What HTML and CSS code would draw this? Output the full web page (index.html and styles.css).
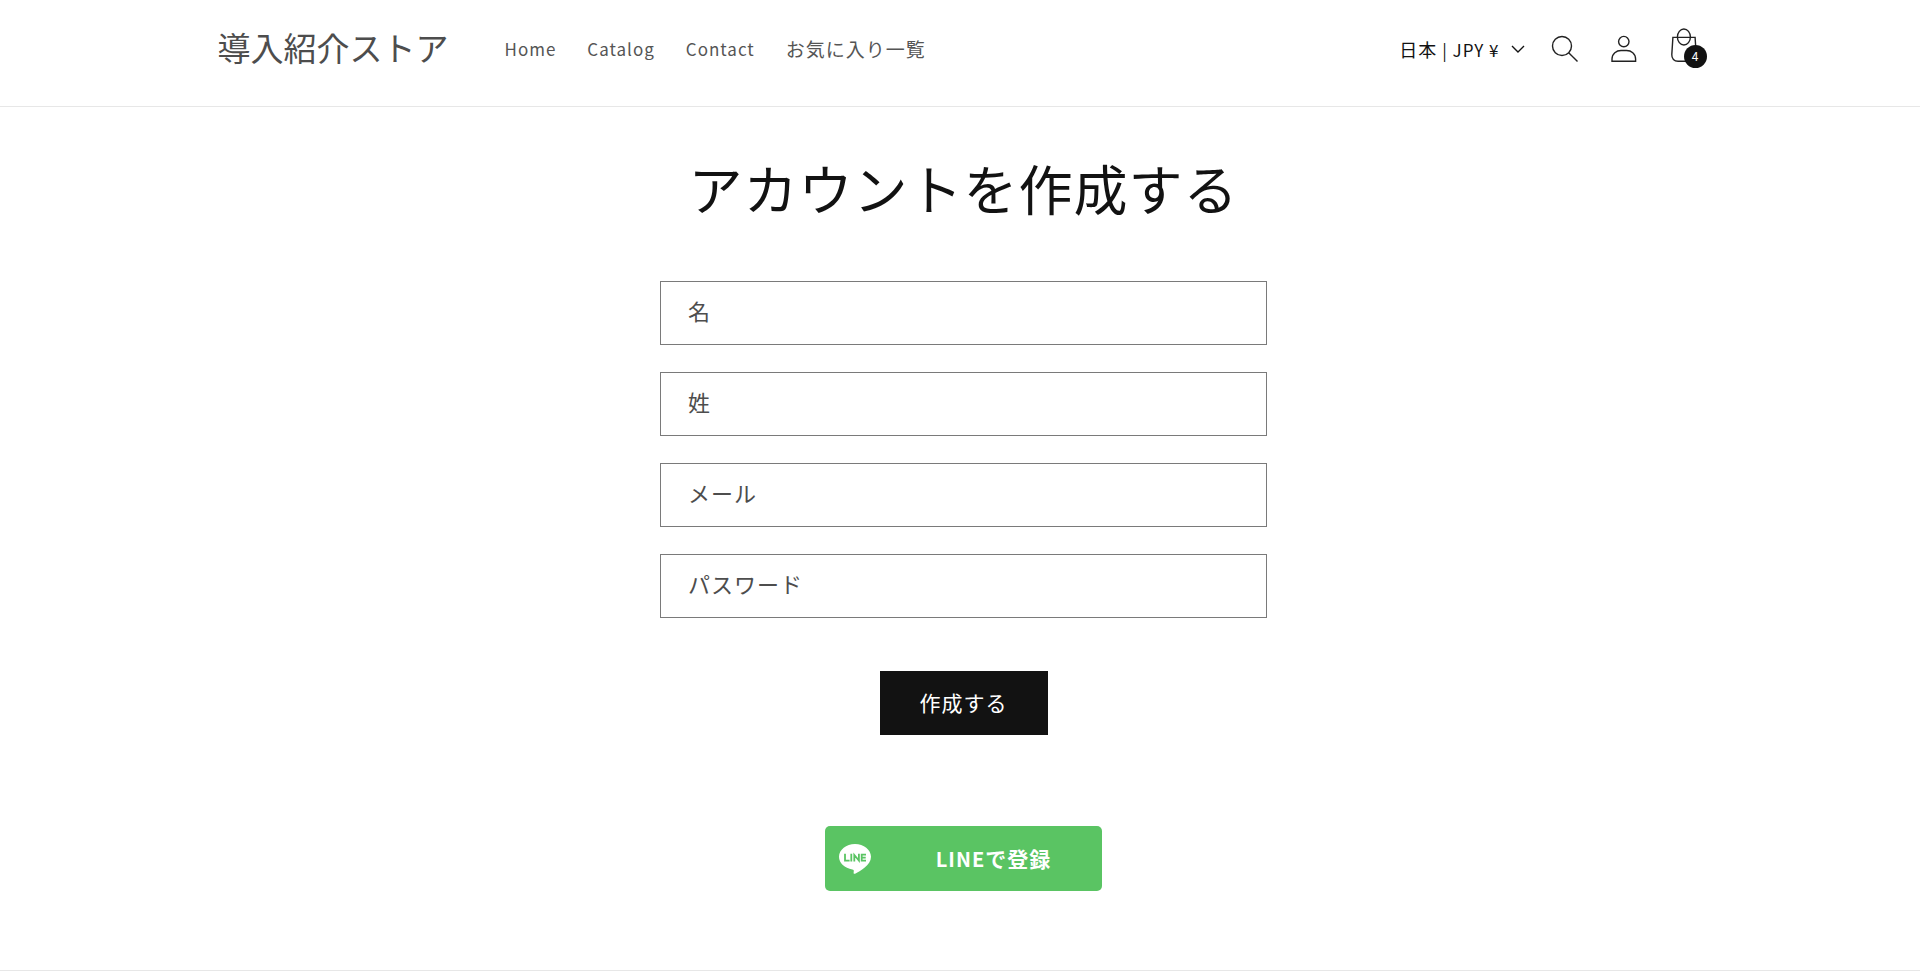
FILE: index.html
```
<!DOCTYPE html>
<html lang="ja">
<head>
<meta charset="utf-8">
<meta name="viewport" content="width=device-width, initial-scale=1">
<title>アカウントを作成する – 導入紹介ストア</title>
<link rel="stylesheet" href="styles.css">
</head>
<body>
<header class="header">
  <div class="header-inner">
    <a class="logo" href="#">導入紹介ストア</a>
    <nav class="nav">
      <a class="nav-link" href="#">Home</a>
      <a class="nav-link" href="#">Catalog</a>
      <a class="nav-link" href="#">Contact</a>
      <a class="nav-link nav-link-ja" href="#">お気に入り一覧</a>
    </nav>
    <div class="header-tools">
      <button class="locale" type="button">
        <span><span class="locale-country">日本</span> | JPY ¥</span>
        <svg class="caret" viewBox="0 0 14 8" aria-hidden="true"><path d="M1 1l6 6 6-6"/></svg>
      </button>
      <button class="icon-link" type="button" aria-label="検索">
        <svg class="icon" viewBox="0 0 60 60"><circle cx="28" cy="27" r="9.5"/><path d="M34.7 33.7l8.800 8.800"/></svg>
      </button>
      <a class="icon-link" href="#" aria-label="ログイン">
        <svg class="icon" viewBox="0 0 60 60"><circle cx="29.8" cy="22.6" r="5.2"/><path d="M18 42.300v-2.200C18 34.500 22.500 31.500 27 31.500h5.600c4.500 0 9 3 9 8.600v2.200z"/></svg>
      </a>
      <a class="icon-link" href="#" aria-label="カート">
        <svg class="icon" viewBox="0 0 60 60"><path d="M18.900 18.400h22.200l1.100 17.200c.2 4-2.400 6.600-6 6.600H24c-3.800 0-6.400-2.600-6.200-6.600z"/><ellipse cx="29.900" cy="18" rx="6.500" ry="8"/></svg>
        <span class="badge">4</span>
      </a>
    </div>
  </div>
</header>
<main class="main">
  <h1 class="title">アカウントを作成する</h1>
  <form class="form">
    <div class="field">
      <input class="field-input" id="first-name" type="text" autocomplete="given-name">
      <label class="field-label" for="first-name">名</label>
    </div>
    <div class="field">
      <input class="field-input" id="last-name" type="text" autocomplete="family-name">
      <label class="field-label" for="last-name">姓</label>
    </div>
    <div class="field">
      <input class="field-input" id="email" type="email" autocomplete="email">
      <label class="field-label" for="email">メール</label>
    </div>
    <div class="field">
      <input class="field-input" id="password" type="password">
      <label class="field-label" for="password">パスワード</label>
    </div>
    <button class="submit" type="button">作成する</button>
  </form>
  <a class="line-button" href="#">
    <svg class="line-logo" viewBox="0 0 32 30" aria-hidden="true">
      <path class="line-bubble" d="M16 0C7.200 0 0 5.700 0 12.800c0 6.300 5.700 11.600 13.400 12.600 1.400.3 1.600.9 1.300 2.400-.3 1.700.2 2.600 1.900 1.700C20.500 27.400 32 21.500 32 12.800 32 5.700 24.800 0 16 0z"/>
      <path class="line-mark" d="M6 9.800v6.800h4.600M12.300 9.800v7.700M15.300 17.500V11l4.600 5.500V9.800M27 10.700h-4.300v5.900H27M22.700 13.600h4"/>
    </svg>
    <span class="line-text"><span class="line-latin">LINE</span>で登録</span>
  </a>
</main>
<footer class="footer"></footer>
</body>
</html>
```
FILE: styles.css
```
* {
  box-sizing: border-box;
}

body {
  margin: 0;
  background: #fff;
  color: #121212;
  font-family: "Noto Sans CJK JP", sans-serif;
  letter-spacing: 1px;
}

a {
  color: inherit;
  text-decoration: none;
}

button {
  border: 0;
  padding: 0;
  background: none;
  color: inherit;
  font: inherit;
  letter-spacing: inherit;
  cursor: pointer;
}

.header {
  padding: 19px 0 27px 7px;
  border-bottom: 1px solid #e7e7e7;
}

.header-inner {
  display: flex;
  align-items: center;
  max-width: 1492px;
  margin: 0 auto;
}

.logo {
  padding-bottom: 4px;
  color: #4d4d4d;
  font-size: 33px;
  line-height: 56px;
  letter-spacing: 0;
}

.nav {
  display: flex;
  align-items: center;
  gap: 31px;
  margin-left: 56px;
}

.nav-link {
  color: #555;
  font-size: 17px;
  line-height: 30px;
}

.nav-link-ja {
  font-size: 19px;
}

.header-tools {
  display: flex;
  align-items: center;
  margin: 0 -4px 0 auto;
}

.locale {
  display: flex;
  align-items: center;
  gap: 11px;
  margin-right: 9px;
  font-size: 17px;
  line-height: 30px;
}

.locale-country {
  font-size: 18px;
}

.caret {
  width: 14px;
  height: 8px;
  fill: none;
  stroke: #121212;
  stroke-width: 1.4;
}

.icon-link {
  position: relative;
  width: 60px;
  height: 60px;
}

.icon {
  display: block;
  width: 60px;
  height: 60px;
  fill: none;
  stroke: #222;
  stroke-width: 1.4;
}

.badge {
  position: absolute;
  left: 30px;
  top: 26px;
  width: 23px;
  height: 23px;
  border-radius: 50%;
  background: #121212;
  color: #fff;
  font-size: 12px;
  line-height: 22px;
  letter-spacing: 0;
  text-align: center;
}

.main {
  display: flex;
  flex-direction: column;
  align-items: center;
  padding: 45px 0 79px 7px;
}

.title {
  margin: 0 0 58px;
  font-size: 54px;
  font-weight: 400;
  line-height: 71px;
}

.form {
  display: flex;
  flex-direction: column;
  align-items: center;
  gap: 27px;
  width: 100%;
  max-width: 607px;
}

.field {
  position: relative;
  width: 100%;
}

.field-input {
  display: block;
  width: 100%;
  height: 64px;
  padding: 0 28px;
  border: 1px solid #7a7a7a;
  border-radius: 0;
  background: #fff;
  color: #121212;
  font: inherit;
  font-size: 22px;
}

.field-label {
  position: absolute;
  left: 28px;
  top: 13px;
  color: #4d4d4d;
  font-size: 22px;
  line-height: 32px;
}

.submit {
  margin-top: 26px;
  padding: 0 40px 2px;
  background: #121212;
  color: #fff;
  font-size: 21px;
  line-height: 62px;
}

.line-button {
  display: flex;
  align-items: center;
  width: 277px;
  height: 65px;
  margin-top: 91px;
  padding-left: 14px;
  border-radius: 5px;
  background: #5ac463;
  color: #fff;
  font-size: 21px;
  font-weight: 700;
  line-height: 32px;
}

.line-logo {
  width: 32px;
  height: 30px;
}

.line-bubble {
  fill: #fff;
}

.line-mark {
  fill: none;
  stroke: #5ac463;
  stroke-width: 1.8;
}

.line-text {
  flex: 1;
  padding-left: 14px;
  text-align: center;
}

.line-latin {
  font-size: 20px;
}

.footer {
  height: 6px;
  border-top: 1px solid #e7e7e7;
}
```
